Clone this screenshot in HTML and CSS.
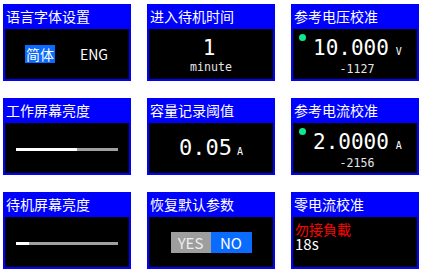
FILE: index.html
```html
<!DOCTYPE html>
<html lang="zh">
<head>
<meta charset="utf-8">
<link rel="stylesheet" href="styles.css">
</head>
<body>
<div class="grid">
  <section class="panel">
    <div class="title">语言字体设置</div>
    <div class="body lang">
      <span class="opt sel">简体</span>
      <span class="opt">ENG</span>
    </div>
  </section>
  <section class="panel">
    <div class="title">进入待机时间</div>
    <div class="body stack">
      <span class="big one">1</span>
      <span class="sub">minute</span>
    </div>
  </section>
  <section class="panel">
    <div class="title">参考电压校准</div>
    <div class="body calib">
      <div class="row">
        <span class="dot"></span>
        <span class="big">10.000</span>
        <span class="unit">V</span>
      </div>
      <span class="sub">-1127</span>
    </div>
  </section>

  <section class="panel">
    <div class="title">工作屏幕亮度</div>
    <div class="body center">
      <div class="bar"><div class="fill" style="width:60%"></div></div>
    </div>
  </section>
  <section class="panel">
    <div class="title">容量记录阈值</div>
    <div class="body center">
      <span class="big">0.05</span>
      <span class="unit">A</span>
    </div>
  </section>
  <section class="panel">
    <div class="title">参考电流校准</div>
    <div class="body calib">
      <div class="row">
        <span class="dot"></span>
        <span class="big">2.0000</span>
        <span class="unit">A</span>
      </div>
      <span class="sub">-2156</span>
    </div>
  </section>

  <section class="panel">
    <div class="title">待机屏幕亮度</div>
    <div class="body center">
      <div class="bar"><div class="fill" style="width:13%"></div></div>
    </div>
  </section>
  <section class="panel">
    <div class="title">恢复默认参数</div>
    <div class="body center">
      <div class="toggle">
        <span class="btn yes">YES</span>
        <span class="btn no">NO</span>
      </div>
    </div>
  </section>
  <section class="panel">
    <div class="title">零电流校准</div>
    <div class="body text">
      <span class="warn">勿接負載</span>
      <span class="count">18s</span>
    </div>
  </section>
</div>
</body>
</html>
```

FILE: styles.css
```css
html, body {
  margin: 0;
  padding: 0;
  background: #fff;
}
body {
  font-family: "Noto Sans CJK SC", "Noto Sans", sans-serif;
  color: #fff;
}
.grid {
  display: grid;
  grid-template-columns: repeat(3, 128px);
  grid-template-rows: repeat(3, 77px);
  column-gap: 16px;
  row-gap: 17px;
  padding: 4px 0 0 3px;
}
.panel {
  display: flex;
  flex-direction: column;
  background: #0000ff;
  border: 2px solid #0000ff;
  border-top: 0;
  box-sizing: border-box;
}
.title {
  height: 25px;
  line-height: 25px;
  font-size: 14px;
  padding-left: 1px;
  white-space: nowrap;
}
.body {
  flex: 1;
  background: #000;
  min-height: 0;
}
.lang {
  display: flex;
  align-items: center;
  padding-left: 20px;
  gap: 25px;
}
.opt {
  font-size: 14px;
  line-height: 18px;
  height: 18px;
}
.opt.sel {
  background: #0a6cff;
  padding: 0 1px;
}
.stack {
  display: flex;
  flex-direction: column;
  align-items: center;
  padding-top: 7px;
  box-sizing: border-box;
}
.big {
  font-family: "DejaVu Sans Mono", monospace;
  font-size: 21px;
  line-height: 24px;
  color: #fff;
}
.sub {
  font-family: "DejaVu Sans Mono", monospace;
  font-size: 11.6px;
  line-height: 14px;
  color: #e6e6e6;
}
.stack .sub {
  margin-top: 0;
}
.one {
  margin-left: -4px;
}
.unit {
  font-family: "DejaVu Sans Mono", monospace;
  font-size: 10px;
  line-height: 12px;
  margin-left: 6px;
}
.calib {
  display: flex;
  flex-direction: column;
  padding-top: 5px;
  box-sizing: border-box;
}
.calib .row {
  display: flex;
  align-items: baseline;
  padding-left: 6px;
}
.dot {
  width: 7px;
  height: 7px;
  border-radius: 50%;
  background: #10e890;
  align-self: flex-start;
  margin-right: 7px;
}
.calib .big {
  margin-top: 2px;
}
.calib .unit {
  margin-left: 7px;
}
.calib .sub {
  align-self: center;
  margin-top: 2px;
  margin-left: 4px;
}
.center {
  display: flex;
  align-items: center;
  justify-content: center;
}
.center .big {
  font-size: 22px;
}
.center .unit {
  align-self: center;
  margin-top: 8px;
  margin-left: 5px;
}
.bar {
  width: 102px;
  height: 3px;
  background: #a0a0a0;
  margin-top: 2px;
}
.fill {
  height: 100%;
  background: #fff;
}
.toggle {
  display: flex;
}
.btn {
  height: 21px;
  line-height: 21px;
  font-size: 15px;
  text-align: center;
}
.btn.yes {
  width: 40px;
  background: #9e9e9e;
  color: #eee;
}
.btn.no {
  width: 41px;
  background: #0a6cff;
  color: #fff;
}
.text {
  display: flex;
  flex-direction: column;
  padding: 5px 0 0 2px;
  box-sizing: border-box;
}
.warn {
  color: #ff0000;
  font-size: 14px;
  line-height: 15px;
}
.count {
  color: #fff;
  font-size: 15px;
  line-height: 13px;
}
```
